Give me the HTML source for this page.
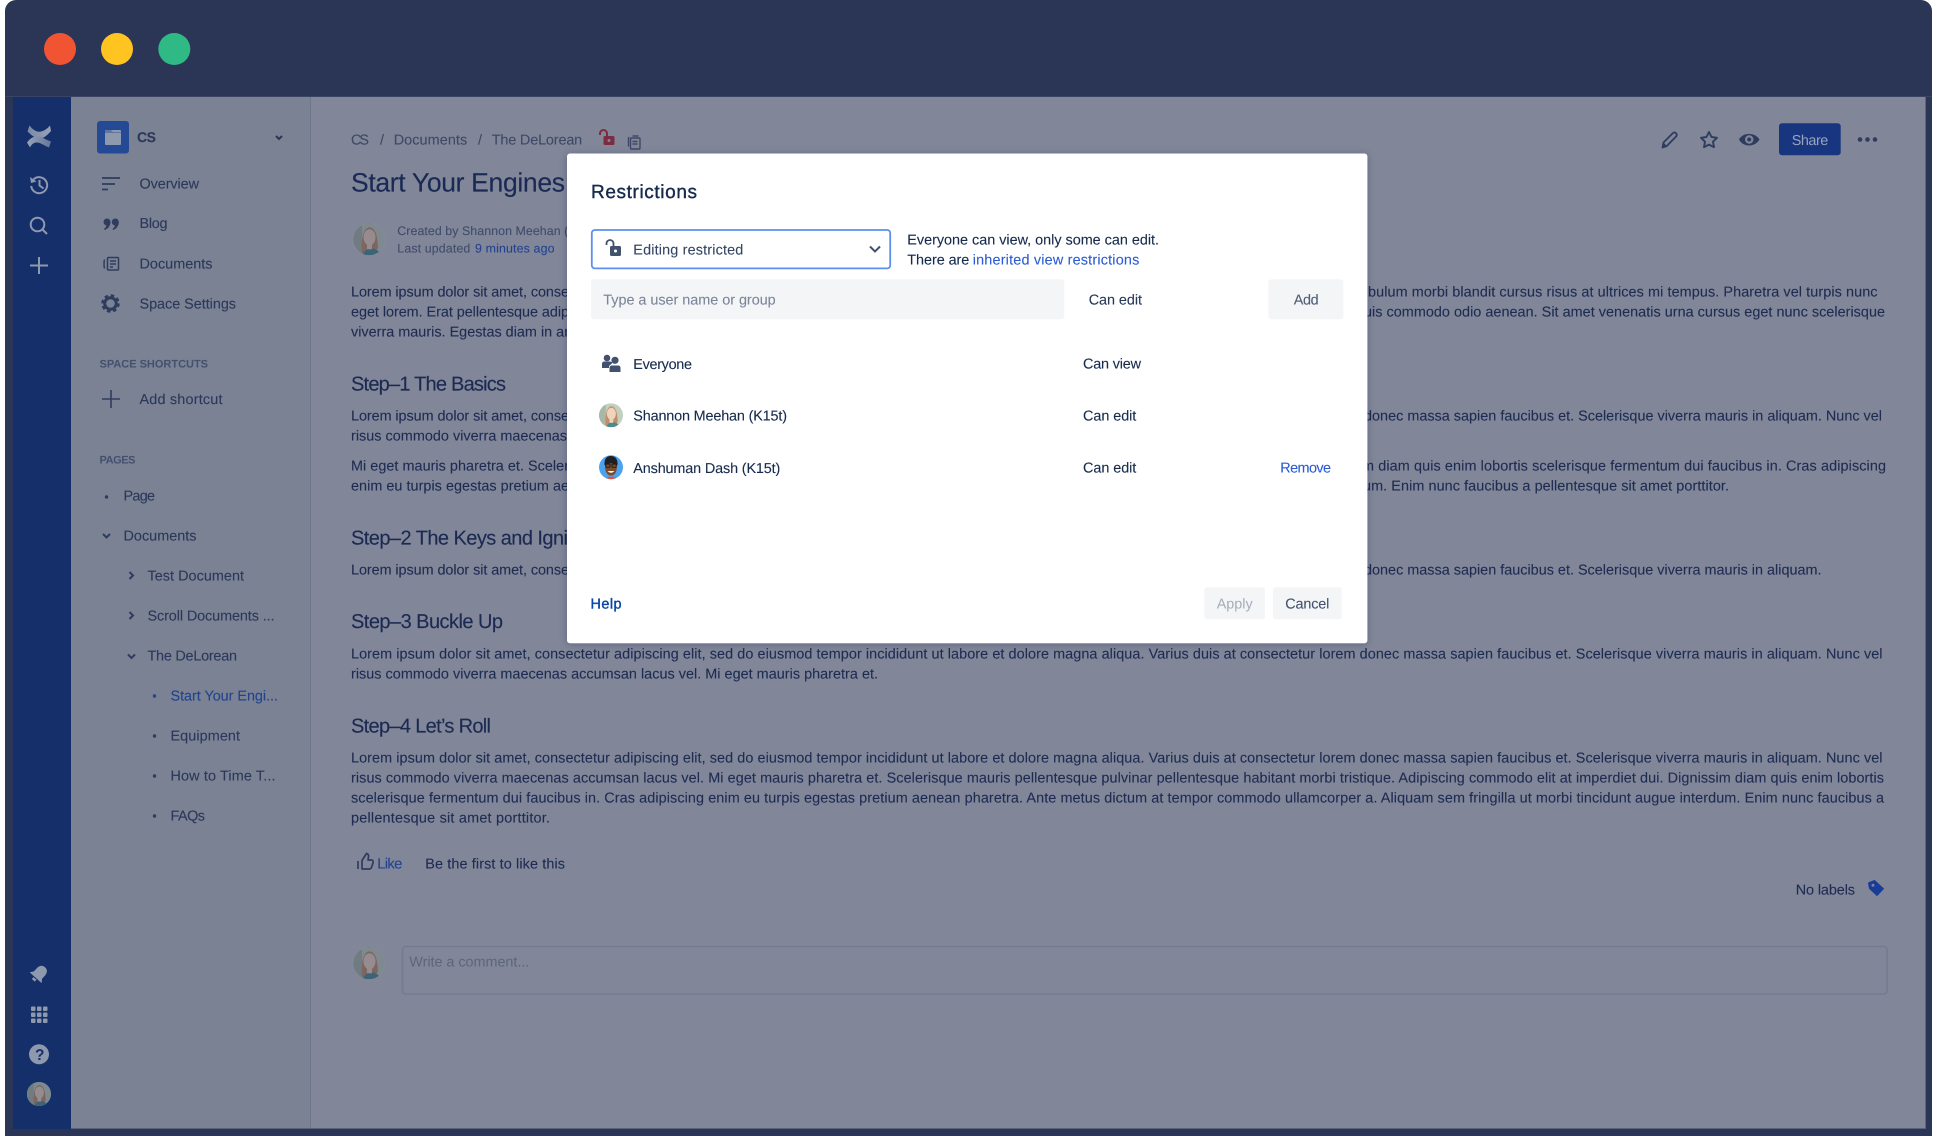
<!DOCTYPE html>
<html lang="en"><head><meta charset="utf-8"><title>Restrictions</title>
<style>
html,body{margin:0;padding:0;background:#fff;width:1937px;height:1136px;overflow:hidden}
svg{display:block;position:absolute;left:0;top:0;font-family:"Liberation Sans",sans-serif;text-rendering:geometricPrecision;filter:blur(.25px)}
.b{font-size:14.4px;fill:#1f2c52;stroke:#1f2c52;stroke-width:.12px}
.s{font-size:14.4px;fill:#2b3859;stroke:#2b3859;stroke-width:.12px}
.h{font-size:20px;fill:#1c2a52;stroke:#1c2a52;stroke-width:.15px}
.m{font-size:12.4px;fill:#414c6b;stroke:#414c6b;stroke-width:.1px}
.d{font-size:14.4px;fill:#172b4d;stroke:#172b4d;stroke-width:.12px}
.l{fill:#2b5cd3;stroke:#2b5cd3;stroke-width:.1px}
</style></head><body>
<svg width="1937" height="1136" viewBox="0 0 1937 1136" xmlns="http://www.w3.org/2000/svg">
<defs>
<filter id="sh" x="-5%" y="-5%" width="110%" height="110%"><feDropShadow dx="0" dy="1" stdDeviation="4" flood-color="#1a2540" flood-opacity=".28"/></filter>
<linearGradient id="lg" x1="0" y1="0" x2="1" y2="0"><stop offset="0" stop-color="#97a2b6"/><stop offset="1" stop-color="#66769a"/></linearGradient>
<linearGradient id="lg2" x1="1" y1="0" x2="0" y2="0"><stop offset="0" stop-color="#97a2b6"/><stop offset="1" stop-color="#7a88a5"/></linearGradient>
<clipPath id="c1"><circle cx="16" cy="16" r="16"/></clipPath>
<g id="shan" clip-path="url(#c1)">
<rect width="32" height="32" fill="#c3cfc0"/>
<rect x="0" width="9" height="32" fill="#a9b7a6"/>
<path d="M9 30 C8 20 9 5 16.500 4 C24 5 24.500 17 25 24 L21 32Z" fill="#c08f66"/>
<ellipse cx="16.500" cy="14" rx="6" ry="8" fill="#efd3bd"/>
<path d="M9 32 C13 26 15 25 17 25 C22 25 26 27 28 32Z" fill="#4c8a90"/>
<rect x="14" y="19" width="5" height="7" fill="#efd3bd"/>
</g>
</defs>

<!-- frame -->
<rect x="5" y="0" width="1927" height="1136" rx="11" fill="#2b3656"/>
<rect x="5" y="1125" width="1927" height="11" fill="#2b3656"/>
<rect x="5" y="96" width="1927" height="1" fill="#3a4563"/>
<circle cx="60" cy="49" r="16" fill="#f15433"/>
<circle cx="117" cy="49" r="16" fill="#ffc41f"/>
<circle cx="174.300" cy="49" r="16" fill="#2fb985"/>

<!-- columns -->
<rect x="13" y="97" width="58" height="1032" fill="#152f6b"/>
<rect x="71" y="97" width="240" height="1032" fill="#7a8294"/>
<rect x="310" y="97" width="1" height="1032" fill="#6d7589"/>
<rect x="311" y="97" width="1614.600" height="1032" fill="#818799"/>
<rect x="71" y="1128" width="1855" height="1" fill="#5a6279"/>

<!-- nav icons -->
<path d="M29.500 125.500 C33 130 37 132.500 41 131.500 C45 130.500 48 128 50 125.500 L51 131 C47.500 135 43.500 139 39 138.500 C35 138 31 135 27.500 131.500 Z" fill="url(#lg2)"/>
<path d="M27 142.500 C31 137 36 135 41 137 C45 139 48 140.500 51 141.500 L49 147.500 C44 145.500 40 142 36 142.500 C33 143 31 145 30 147.500 Z" fill="url(#lg)"/>
<g fill="none" stroke="#8e99ae" stroke-width="2">
<path d="M33.500 179.500 A8 8 0 1 1 31.200 186"/>
<path d="M39.500 180 V185.500 L43.500 188.500"/>
<circle cx="37.500" cy="224.500" r="6.800"/>
<path d="M42.500 229.500 L47 234"/>
<path d="M30 265.500 H48 M39 257 V274"/>
</g>
<path d="M30 177 L31 183 L36.500 181.500Z" fill="#8e99ae"/>
<g transform="rotate(42 39 974)" fill="#8e99ae"><path d="M39 965 c-4 0 -5.500 3 -5.500 6.500 v4 l-2.500 3.500 h16 l-2.500 -3.500 v-4 c0 -3.500 -1.500 -6.500 -5.500 -6.500z"/><rect x="37" y="980" width="4" height="2.500"/></g>
<g fill="#8e99ae">
<rect x="31" y="1006.500" width="4.500" height="4.500" rx="1"/><rect x="37" y="1006.500" width="4.500" height="4.500" rx="1"/><rect x="43" y="1006.500" width="4.500" height="4.500" rx="1"/>
<rect x="31" y="1012.500" width="4.500" height="4.500" rx="1"/><rect x="37" y="1012.500" width="4.500" height="4.500" rx="1"/><rect x="43" y="1012.500" width="4.500" height="4.500" rx="1"/>
<rect x="31" y="1018.500" width="4.500" height="4.500" rx="1"/><rect x="37" y="1018.500" width="4.500" height="4.500" rx="1"/><rect x="43" y="1018.500" width="4.500" height="4.500" rx="1"/>
<circle cx="39" cy="1054.300" r="10"/>
</g>
<text x="35" y="1060" font-size="15.500" font-weight="700" fill="#152f6b">?</text>
<g transform="translate(27 1082) scale(.75)"><use href="#shan"/><circle cx="16" cy="16" r="16" fill="#2b3656" opacity=".45"/></g>

<!-- sidebar -->
<rect x="97" y="121" width="32" height="32.500" rx="3" fill="#244a96"/>
<rect x="105" y="130" width="16" height="15" rx="1" fill="#8f99ad"/>
<path d="M105 133 V131 q0 -1 1 -1 h5 l2 2 h8 v1z" fill="#64759c"/>
<text x="137" y="142" class="s" font-weight="700" textLength="19" style="font-size:14px">CS</text>
<path d="M276 136 L279 139 L282 136" fill="none" stroke="#2b3656" stroke-width="2"/>
<path d="M102 178 H120 M102 184 H115 M102 189.500 H108" stroke="#2f3c5e" stroke-width="1.800" fill="none"/>
<g fill="#2f3c5e"><circle cx="107" cy="222" r="3.500"/><path d="M110.400 222 C110.400 226 108 229 104.500 230 L104 229 C106 227.500 106.500 226 106.500 224Z"/><circle cx="115.300" cy="222" r="3.500"/><path d="M118.800 222 C118.800 226 116.400 229 113 230 L112.500 229 C114.500 227.500 115 226 115 224Z"/></g>
<g fill="none" stroke="#2f3c5e" stroke-width="1.500"><rect x="107.500" y="257.500" width="11" height="12.500" rx="1"/><path d="M104.500 259.500 Q103.500 264 104.500 268.500 M110 261 H116 M110 264 H116 M110 267 H113"/></g>
<circle cx="110.500" cy="303.500" r="5.800" fill="none" stroke="#2f3c5e" stroke-width="3"/>
<circle cx="110.500" cy="303.500" r="8" fill="none" stroke="#2f3c5e" stroke-width="2.500" stroke-dasharray="3.500 2.780"/>
<path d="M102 399 H120 M111 390 V408" stroke="#2f3c5e" stroke-width="1.600" fill="none"/>
<g>
<text x="139.500" y="188.400" class="s" textLength="59.500">Overview</text>
<text x="139.500" y="228" class="s" textLength="28">Blog</text>
<text x="139.500" y="268.500" class="s" textLength="73">Documents</text>
<text x="139.500" y="308.500" class="s" textLength="96.500">Space Settings</text>
<text x="99.500" y="367.700" font-size="11" font-weight="700" fill="#44506e" textLength="108.500">SPACE SHORTCUTS</text>
<text x="139.500" y="404" class="s" textLength="83">Add shortcut</text>
<text x="99.500" y="463.700" font-size="11" font-weight="700" fill="#44506e" textLength="36">PAGES</text>
<text x="123.500" y="500.400" class="s" textLength="31.500">Page</text>
<text x="123.500" y="540.500" class="s" textLength="73">Documents</text>
<text x="147.500" y="580.700" class="s" textLength="96.500">Test Document</text>
<text x="147.500" y="620.700" class="s" textLength="127">Scroll Documents ...</text>
<text x="147.500" y="660.700" class="s" textLength="89.500">The DeLorean</text>
<text x="170.500" y="700.500" font-size="14.400" fill="#23438f" stroke="#23438f" stroke-width=".12" textLength="107.500">Start Your Engi...</text>
<text x="170.500" y="740.500" class="s" textLength="69.500">Equipment</text>
<text x="170.500" y="780.500" class="s" textLength="105">How to Time T...</text>
<text x="170.500" y="820.500" class="s" textLength="34.500">FAQs</text>
</g>
<g fill="#2f3c5e"><circle cx="106.500" cy="497" r="1.700"/><circle cx="154.500" cy="736" r="1.700"/><circle cx="154.500" cy="776" r="1.700"/><circle cx="154.500" cy="816" r="1.700"/></g>
<circle cx="154.500" cy="696" r="1.700" fill="#23438f"/>
<g fill="none" stroke="#2f3c5e" stroke-width="2">
<path d="M103 534 L106.500 537.500 L110 534"/>
<path d="M129.500 572 L133 575.500 L129.500 579"/>
<path d="M129.500 612 L133 615.500 L129.500 619"/>
<path d="M128 654.500 L131.500 658 L135 654.500"/>
</g>

<!-- breadcrumb -->
<g font-size="14.400" fill="#3d4968" stroke="#3d4968" stroke-width=".1">
<text x="351" y="144.700" textLength="18">CS</text>
<text x="380" y="144.700">/</text>
<text x="393.700" y="144.700" textLength="73.500">Documents</text>
<text x="478" y="144.700">/</text>
<text x="491.700" y="144.700" textLength="90.500">The DeLorean</text>
</g>
<g fill="none" stroke="#7b2c40" stroke-width="2"><path d="M600 135 V133.500 a3.500 3.500 0 0 1 7 0 V136"/></g>
<rect x="603.500" y="136" width="11" height="9" rx="1.500" fill="#7b2c40"/>
<circle cx="609" cy="140.500" r="1.500" fill="#818799"/>
<g fill="none" stroke="#3d4868" stroke-width="1.400"><rect x="630.500" y="138" width="9.500" height="11" rx="1"/><path d="M628.500 146.500 V138.500 q0 -1 .8 -1 M632.500 136 h6"/><path d="M632.500 141.500 h5 M632.500 144 h5"/></g>

<!-- header actions -->
<path d="M1662.500 147.500 l1 -5 L1673 133 q1.500 -1.300 3 .3 q1.500 1.500 .3 3 L1666.800 146Z" fill="none" stroke="#2f3c5e" stroke-width="1.800" stroke-linejoin="round"/>
<path d="M1662.500 147.500 l1 -5 l3.300 3.500Z" fill="#2f3c5e"/>
<path d="M1709 132 L1711.500 137 L1717 137.800 L1713 141.700 L1714 147.200 L1709 144.600 L1704 147.200 L1705 141.700 L1701 137.800 L1706.500 137Z" fill="none" stroke="#2f3c5e" stroke-width="1.900" stroke-linejoin="round"/>
<path d="M1739 139.500 C1743 132 1755 132 1759.500 139.500 C1755 147.500 1743 147.500 1739 139.500Z" fill="#2f3c5e"/>
<circle cx="1749.200" cy="139.500" r="4.200" fill="#818799"/><circle cx="1749.200" cy="139.500" r="2" fill="#2f3c5e"/>
<rect x="1779" y="123.300" width="61.700" height="32" rx="3" fill="#18367f"/>
<text x="1791.700" y="145" font-size="14.400" fill="#98a3bc" textLength="36.600">Share</text>
<circle cx="1860" cy="139.500" r="2.300" fill="#2f3c5e"/><circle cx="1867.500" cy="139.500" r="2.300" fill="#2f3c5e"/><circle cx="1875" cy="139.500" r="2.300" fill="#2f3c5e"/>

<!-- title -->
<text x="351" y="191.500" font-size="26.500" fill="#1a2a55" stroke="#1a2a55" stroke-width=".15" textLength="214">Start Your Engines</text>
<g transform="translate(353 223.300)"><use href="#shan"/><circle cx="16" cy="16" r="16" fill="#2b3656" opacity=".45"/></g>
<text x="397.300" y="235" class="m" textLength="171">Created by Shannon Meehan (</text>
<text x="397.300" y="252.500" class="m" textLength="73">Last updated</text>
<text x="475" y="252.500" font-size="12.400" fill="#23438f" stroke="#23438f" stroke-width=".1" textLength="79.500">9 minutes ago</text>

<!-- body: left chunks -->
<g>
<text class="b" x="351" y="296.700" textLength="218">Lorem ipsum dolor sit amet, conse</text>
<text class="b" x="351" y="316.700" textLength="218">eget lorem. Erat pellentesque adip</text>
<text class="b" x="351" y="336.700" textLength="218">viverra mauris. Egestas diam in ar</text>
<text class="h" x="351" y="390.300" textLength="155">Step–1 The Basics</text>
<text class="b" x="351" y="420.700" textLength="218">Lorem ipsum dolor sit amet, conse</text>
<text class="b" x="351" y="440.700" textLength="216">risus commodo viverra maecenas</text>
<text class="b" x="351" y="470.700" textLength="218">Mi eget mauris pharetra et. Sceler</text>
<text class="b" x="351" y="490.700" textLength="218">enim eu turpis egestas pretium ae</text>
<text class="h" x="351" y="544.300" textLength="217">Step–2 The Keys and Igni</text>
<text class="b" x="351" y="574.700" textLength="218">Lorem ipsum dolor sit amet, conse</text>
<!-- right chunks -->
<text class="b" x="1368" y="296.700" textLength="509.500">bulum morbi blandit cursus risus at ultrices mi tempus. Pharetra vel turpis nunc</text>
<text class="b" x="1364" y="316.700" textLength="521">uis commodo odio aenean. Sit amet venenatis urna cursus eget nunc scelerisque</text>
<text class="b" x="1364" y="420.700" textLength="518">donec massa sapien faucibus et. Scelerisque viverra mauris in aliquam. Nunc vel</text>
<text class="b" x="1362" y="470.700" textLength="524">m diam quis enim lobortis scelerisque fermentum dui faucibus in. Cras adipiscing</text>
<text class="b" x="1363" y="490.700" textLength="366">um. Enim nunc faucibus a pellentesque sit amet porttitor.</text>
<text class="b" x="1364" y="574.700" textLength="457.500">donec massa sapien faucibus et. Scelerisque viverra mauris in aliquam.</text>
<!-- full lines -->
<text class="h" x="351" y="628" textLength="152">Step–3 Buckle Up</text>
<text class="b" x="351" y="658.500" textLength="1531.500">Lorem ipsum dolor sit amet, consectetur adipiscing elit, sed do eiusmod tempor incididunt ut labore et dolore magna aliqua. Varius duis at consectetur lorem donec massa sapien faucibus et. Scelerisque viverra mauris in aliquam. Nunc vel</text>
<text class="b" x="351" y="678.500" textLength="527">risus commodo viverra maecenas accumsan lacus vel. Mi eget mauris pharetra et.</text>
<text class="h" x="351" y="732.500" textLength="140">Step–4 Let’s Roll</text>
<text class="b" x="351" y="762.500" textLength="1531.500">Lorem ipsum dolor sit amet, consectetur adipiscing elit, sed do eiusmod tempor incididunt ut labore et dolore magna aliqua. Varius duis at consectetur lorem donec massa sapien faucibus et. Scelerisque viverra mauris in aliquam. Nunc vel</text>
<text class="b" x="351" y="782.500" textLength="1533">risus commodo viverra maecenas accumsan lacus vel. Mi eget mauris pharetra et. Scelerisque mauris pellentesque pulvinar pellentesque habitant morbi tristique. Adipiscing commodo elit at imperdiet dui. Dignissim diam quis enim lobortis</text>
<text class="b" x="351" y="802.500" textLength="1533">scelerisque fermentum dui faucibus in. Cras adipiscing enim eu turpis egestas pretium aenean pharetra. Ante metus dictum at tempor commodo ullamcorper a. Aliquam sem fringilla ut morbi tincidunt augue interdum. Enim nunc faucibus a</text>
<text class="b" x="351" y="822.500" textLength="199">pellentesque sit amet porttitor.</text>
</g>

<!-- like / labels / comment -->
<g fill="none" stroke="#2f3c5e" stroke-width="1.700" stroke-linejoin="round"><path d="M358 861 V869 M362 860.500 L366.500 853.500 Q369 854 368.500 857 L368 860 H372 Q373.500 860.500 373 863 L371.500 867.500 Q371 869 369 869 H362Z"/></g>
<text x="377.300" y="868.700" font-size="14.800" fill="#23438f" stroke="#23438f" stroke-width=".1" textLength="25">Like</text>
<text x="425.300" y="868.700" class="b" textLength="139.700">Be the first to like this</text>
<text x="1795.700" y="894.400" class="b" textLength="59.300">No labels</text>
<path d="M1868.500 883 L1874.500 880.500 L1883.500 888.700 L1877 895.500 L1869.500 888.500Z" fill="#183c97" stroke="#183c97" stroke-linejoin="round" stroke-width="1"/>
<circle cx="1873" cy="885.300" r="1.500" fill="#818799"/>
<g transform="translate(353 947.300)"><use href="#shan"/><circle cx="16" cy="16" r="16" fill="#2b3656" opacity=".45"/></g>
<rect x="402.500" y="946.500" width="1484.500" height="47.500" rx="3" fill="none" stroke="#747b90" stroke-width="1.600"/>
<text x="409.300" y="966.500" font-size="14.400" fill="#5d6579" textLength="120">Write a comment...</text>

<!-- dialog -->
<rect x="567" y="153.500" width="800.400" height="489.800" rx="3" fill="#fff" filter="url(#sh)"/>
<text x="591" y="198" font-size="19" fill="#172b4d" stroke="#172b4d" stroke-width=".4" textLength="106">Restrictions</text>
<rect x="591.800" y="230" width="298.400" height="38.400" rx="3" fill="#fff" stroke="#5c8fef" stroke-width="1.800"/>
<path d="M606.500 245 V243.500 a3.500 3.500 0 0 1 7 0 V247" fill="none" stroke="#42526e" stroke-width="1.800"/>
<rect x="610" y="246" width="11" height="10" rx="1.500" fill="#42526e"/><circle cx="615.500" cy="251" r="1.500" fill="#fff"/>
<text x="633.300" y="254.500" font-size="14.400" fill="#344563" stroke="#344563" stroke-width=".1" textLength="110">Editing restricted</text>
<path d="M870 246.500 L875 251.500 L880 246.500" fill="none" stroke="#42526e" stroke-width="2"/>
<text x="907.300" y="244.700" class="d" textLength="251.700">Everyone can view, only some can edit.</text>
<text x="907.300" y="264.700" class="d" textLength="62">There are</text>
<text x="972.700" y="264.700" font-size="14.400" class="l" textLength="166.600">inherited view restrictions</text>
<rect x="591" y="279.300" width="473.300" height="40" rx="3" fill="#f4f5f7"/>
<text x="603.300" y="304.500" font-size="14.400" fill="#7a869a" stroke="#7a869a" stroke-width=".1" textLength="172.400">Type a user name or group</text>
<text x="1088.700" y="304.700" font-size="14.400" fill="#253858" stroke="#253858" stroke-width=".1" textLength="53.300">Can edit</text>
<rect x="1268.300" y="279.300" width="75" height="40" rx="3" fill="#f4f5f7"/>
<text x="1293.700" y="304.500" font-size="14.400" fill="#505f79" stroke="#505f79" stroke-width=".1" textLength="25">Add</text>

<g fill="#42526e"><circle cx="607" cy="358" r="3.300"/><path d="M602 368 V364 q0 -2.500 2.500 -2.500 h5 q2.500 0 3 1.500 L609 366 V368Z"/><circle cx="615" cy="360.300" r="3.600"/><path d="M609.500 372 V368 q0 -2.500 2.500 -2.500 h6 q2.500 0 2.500 2.500 V372Z"/></g>
<text x="633.300" y="368.800" class="d" textLength="58.700">Everyone</text>
<text x="1083" y="368.700" class="d" textLength="58">Can view</text>

<g transform="translate(599 403.300) scale(.75)"><use href="#shan"/></g>
<text x="633.300" y="420.700" class="d" textLength="153.700">Shannon Meehan (K15t)</text>
<text x="1083" y="420.700" class="d" textLength="53.300">Can edit</text>

<circle cx="611" cy="467.300" r="12" fill="#4ba3ef"/>
<path d="M604.500 465 C604 458 607.500 456 611 456 C615 456 618 459 617.500 465Z" fill="#1f1f24"/>
<path d="M605 465 C605 472 607 475.500 611 475.500 C615 475.500 617 472 617 465 C614 462.500 608 462.500 605 465Z" fill="#7a4a2c"/>
<g fill="none" stroke="#1a1a1a" stroke-width=".9"><rect x="605.800" y="464" width="4.200" height="3.300" rx="1"/><rect x="612" y="464" width="4.200" height="3.300" rx="1"/></g>
<path d="M607.500 471 H614.500 Q611 474.500 607.500 471Z" fill="#fff"/>
<path d="M605.500 477.700 Q611 475.500 616.500 477.700 A12 12 0 0 1 605.500 477.700Z" fill="#e2533f"/>
<text x="633.300" y="472.800" class="d" textLength="147">Anshuman Dash (K15t)</text>
<text x="1083" y="472.700" class="d" textLength="53.300">Can edit</text>
<text x="1280.300" y="472.700" font-size="14.400" class="l" textLength="50.700">Remove</text>

<text x="590.500" y="608.500" font-size="14.400" fill="#0747a6" stroke="#0747a6" stroke-width=".4" textLength="31">Help</text>
<rect x="1204.300" y="587.300" width="60.700" height="32" rx="3" fill="#f4f5f7"/>
<text x="1216.700" y="608.500" font-size="14.400" fill="#a5adba" textLength="36">Apply</text>
<rect x="1273" y="587.300" width="68.700" height="32" rx="3" fill="#f4f5f7"/>
<text x="1285.300" y="608.500" font-size="14.400" fill="#42526e" stroke="#42526e" stroke-width=".1" textLength="44">Cancel</text>
</svg>
</body></html>
